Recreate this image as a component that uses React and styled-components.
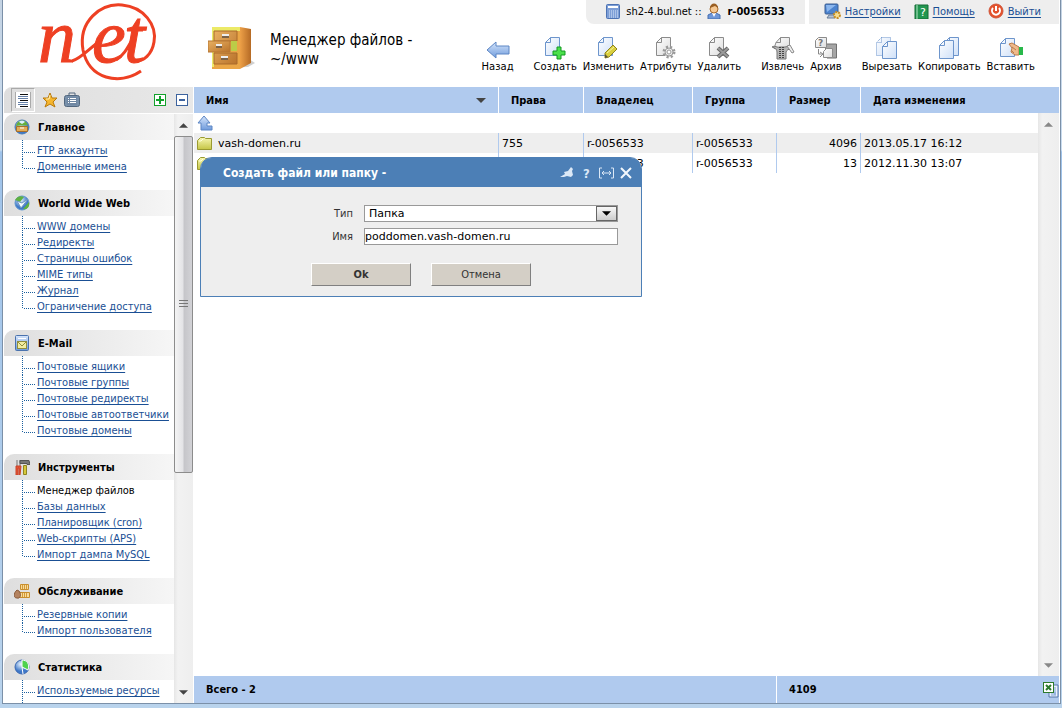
import React from 'react'
import styled, { createGlobalStyle, css } from 'styled-components'

const GlobalStyle = createGlobalStyle`
  * {
    box-sizing: border-box;
  }
  body {
    margin: 0;
    background: #b7d1eb;
    color: #000;
    font-family: 'DejaVu Sans Condensed', Tahoma, sans-serif;
    font-size: 11px;
  }
  svg {
    display: block;
    flex: none;
  }
  button {
    padding: 0;
    border: 0;
    background: none;
    color: inherit;
    font: inherit;
    cursor: pointer;
  }
  a {
    color: #1a4f94;
    text-underline-offset: 2px;
  }
`

const wide = css`
  font-family: 'DejaVu Sans', Verdana, sans-serif;
`

const Desktop = styled.div`
  height: 100vh;
  padding: 0 1px 4px 2px;
  background: linear-gradient(#c4d3e3 0, #c9dcef 150px, #9fc3ea 152px, #b9d3ec 100%);
`

const Frame = styled.div`
  position: relative;
  display: flex;
  flex-direction: column;
  height: 100%;
  padding: 0 1px;
  border: solid #7b90a8;
  border-width: 0 1px 1px;
  background: #fff;
`

const Header = styled.header`
  display: flex;
  flex: none;
  height: 87px;
`

const Logo = styled.div`
  width: 190px;
  flex: none;
`

const PageTitle = styled.div`
  display: flex;
  gap: 14px;
  flex: 1;
  padding: 23px 0 0 14px;
`

const Heading = styled.h1`
  max-width: 180px;
  margin: 8px 0 0;
  font-size: 15px;
  font-weight: normal;
  line-height: 19px;
`

const HeaderRight = styled.div`
  display: flex;
  flex-direction: column;
  align-items: flex-end;
`

const TopBar = styled.div`
  display: flex;
  gap: 4px;
`

const TopBox = styled.div`
  display: flex;
  align-items: center;
  gap: 6px;
  height: 24px;
  padding: ${p => (p.$first ? '0 20px 2px' : '0 18px 2px 15px')};
  background: #eee;
  border-radius: ${p => (p.$first ? '0 0 0 8px' : '0')};
`

const TopLink = styled.a`
  display: flex;
  align-items: center;
  gap: 4px;
  margin-right: ${p => (p.$last ? '0' : '7px')};
`

const Toolbar = styled.nav`
  display: flex;
  gap: 20px;
  padding: 12px 24px 0 0;
`

const ToolGroup = styled.div`
  display: flex;
  gap: 6px;
`

const Tool = styled.button`
  ${wide}
  display: flex;
  flex-direction: column;
  align-items: center;
  font-size: 10px;
  line-height: 14px;
`

const Body = styled.div`
  display: flex;
  flex: 1;
  min-height: 0;
`

const Sidebar = styled.aside`
  display: flex;
  flex-direction: column;
  width: 190px;
  flex: none;
  border-right: 1px solid #fff;
`

const SideTools = styled.div`
  display: flex;
  align-items: center;
  gap: 6px;
  height: 26px;
  flex: none;
  margin-bottom: 1px;
  padding: 0 5px 0 7px;
  border-radius: 8px 0 0 0;
  background: linear-gradient(to right, #dedede, #e8e8e8);
`

const ViewButton = styled.button`
  padding: 3px;
  border: ${p => (p.$pressed ? '1px solid #a9a9a9' : '0')};
  border-right-color: #fff;
  border-bottom-color: #fff;
  margin-right: ${p => (p.$pressed ? '-2px' : '-6px')};
`

const SquareButton = styled.button`
  width: 12px;
  height: 12px;
  border: 1px solid ${p => p.$color};
  background: #fff;
  margin-left: ${p => (p.$push ? 'auto' : '4px')};
  color: ${p => p.$color};
`

const SideScroll = styled.div`
  display: flex;
  flex: 1;
  min-height: 0;
`

const Sections = styled.div`
  flex: 1;
  overflow: hidden;
`

const Section = styled.section`
  padding-bottom: ${p => (p.$clipped ? '0' : '15px')};
`

const SectionTitle = styled.h2`
  display: flex;
  align-items: center;
  gap: 8px;
  height: 26px;
  margin: 0;
  padding-left: 10px;
  border-radius: 10px 0 0 0;
  background: linear-gradient(to right, #dedede, #f6f6f6);
  font-size: 11px;
`

const Tree = styled.ul`
  margin: 0;
  padding: 0 0 0 18px;
  list-style: none;
`

const TreeItem = styled.li`
  padding-left: 15px;
  line-height: 16px;
  white-space: nowrap;
  background:
    repeating-linear-gradient(#1a5f9e 0 1px, transparent 1px 2px) 0 0 / 1px 100% no-repeat,
    repeating-linear-gradient(to right, #1a5f9e 0 1px, transparent 1px 2px) 2px calc(100% - 6px) / 11px 1px no-repeat;
  &:first-child {
    padding-top: 3px;
  }
  &:last-child {
    background-size: ${p => (p.$clipped ? '1px 100%' : '1px calc(100% - 6px)')}, 11px 1px;
    padding-bottom: ${p => (p.$clipped ? '6px' : '0')};
    background-position: 0 0, 2px ${p => (p.$clipped ? '12px' : 'calc(100% - 6px)')};
  }
`

const ScrollBar = styled.div`
  display: flex;
  flex-direction: column;
  flex: 1;
  background: linear-gradient(to right, #e6e6e6, #f2f2f2 20%, #eee);
`

const ScrollArrow = styled.button`
  display: flex;
  align-items: center;
  justify-content: center;
  height: 22px;
  flex: none;
`

const ScrollThumb = styled.div`
  display: flex;
  align-items: center;
  justify-content: center;
  flex: 336;
  border: 1px solid #8c8c8c;
  border-radius: 2px;
  background: linear-gradient(to right, #f4f4f4, #e4e4e7 45%, #c6c6ca 55%, #d2d2d6);
`

const ScrollRest = styled.div`
  flex: 209;
`

const Main = styled.main`
  display: flex;
  flex-direction: column;
  flex: 1;
  min-width: 0;
`

const ListArea = styled.div`
  display: flex;
  flex: 1;
  min-height: 0;
`

const ListTable = styled.div`
  flex: 1;
`

const ScrollColumn = styled.div`
  display: flex;
  flex-direction: column;
  flex: none;
  width: ${p => (p.$narrow ? '19px' : '21px')};
`

const HeaderCap = styled.div`
  height: 26px;
  background: #b0caee;
`

const Table = styled.table`
  width: 100%;
  table-layout: fixed;
  border-collapse: separate;
  border-spacing: 0;
`

const Th = styled.th`
  height: 26px;
  padding: 0 12px;
  border-left: ${p => (p.$first ? '0' : '1px solid #fff')};
  background: #b0caee;
  text-align: left;
`

const SortLabel = styled.span`
  display: flex;
  align-items: center;
  justify-content: space-between;
`

const Row = styled.tr`
  background: ${p => (p.$striped ? '#eee' : '#fff')};
`

const Td = styled.td`
  ${wide}
  height: 20px;
  padding: 0 3px;
  border-left: ${p => (p.$first ? '0' : '1px solid #b0caee')};
  text-align: ${p => (p.$right ? 'right' : 'left')};
  white-space: nowrap;
`

const FileName = styled.span`
  display: flex;
  align-items: center;
  gap: 6px;
`

const Footer = styled.footer`
  display: flex;
  height: 27px;
  flex: none;
  background: #b0caee;
  font-weight: bold;
`

const FooterCell = styled.div`
  display: flex;
  align-items: center;
  justify-content: space-between;
  padding-left: 12px;
  ${p => (p.$total ? 'width: 283px; border-left: 1px solid #fff;' : 'flex: 1;')}
`

const Dialog = styled.form`
  position: absolute;
  left: 197px;
  top: 157px;
  width: 442px;
  border: 1px solid #4c7fb6;
  border-radius: 12px 12px 0 0;
  background: #eee;
`

const DialogBar = styled.div`
  display: flex;
  align-items: center;
  gap: 5px;
  height: 29px;
  padding: 0 8px 0 22px;
  border-radius: 10px 10px 0 0;
  background: #4c7fb6;
  color: #fff;
`

const DialogTitle = styled.h2`
  flex: 1;
  margin: 0;
  font-size: 12px;
`

const Fields = styled.div`
  display: grid;
  grid-template-columns: 152px 254px;
  gap: 6px 11px;
  align-items: center;
  padding-top: 18px;
`

const Label = styled.label`
  color: #333;
  text-align: right;
`

const control = css`
  ${wide}
  display: block;
  width: 100%;
  height: 17px;
  margin: 0;
  border: 1px solid #999;
  border-radius: 0;
  background: #fff;
  color: #000;
  font-size: 11px;
`

const Input = styled.input`
  ${control}
  padding: 0;
`

const SelectBox = styled.div`
  position: relative;
`

const Select = styled.select`
  ${control}
  appearance: none;
  padding: 0 24px 0 4px;
`

const SelectArrow = styled.span`
  position: absolute;
  top: 1px;
  right: 1px;
  display: flex;
  align-items: center;
  justify-content: center;
  width: 21px;
  height: 15px;
  border: 1px solid #666;
  background: linear-gradient(#f8f8f8, #ccc);
  pointer-events: none;
`

const Buttons = styled.div`
  display: flex;
  gap: 20px;
  padding: 18px 0 10px 110px;
`

const DialogButton = styled.button`
  width: 100px;
  height: 23px;
  border: 1px solid;
  border-color: #fff #808080 #808080 #fff;
  background: #d4cfc6;
  color: #333;
  font-weight: ${p => (p.$primary ? 'bold' : 'normal')};
`

const Arrow = ({ up, w = 9, color = '#444' }) => (
  <svg width={w} height="5" viewBox="0 0 10 5">
    <path d={up ? 'M0 5L5 0l5 5z' : 'M0 0h10L5 5z'} fill={color} />
  </svg>
)

const Icon = ({ w = 16, h = w, box, children }) => (
  <svg width={w} height={h} viewBox={box || `0 0 ${w} ${h}`}>{children}</svg>
)

const Sheet = ({ x = 5, y = 1, h = 18, gray, dashed }) => (
  <path
    d={`M${x + 5}.5 ${y}.5h9v${h}h-14v-${h - 5}z M${x + 5}.5 ${y}.5v5h-5`}
    fill={gray ? 'url(#paperGray)' : 'url(#paper)'}
    stroke={gray ? '#8b8b8b' : '#6d95cc'}
    strokeDasharray={dashed ? '1 1' : 'none'}
  />
)

const DefsSvg = styled.svg`
  position: absolute;
`

const Defs = () => (
  <DefsSvg width="0" height="0">
    <defs>
      <linearGradient id="paper" x2="1" y2="1">
        <stop offset="0" stopColor="#fff" />
        <stop offset="1" stopColor="#cfe0f8" />
      </linearGradient>
      <linearGradient id="paperGray" x2="1" y2="1">
        <stop offset="0" stopColor="#fff" />
        <stop offset="1" stopColor="#ddd" />
      </linearGradient>
      <linearGradient id="blue" x2="0" y2="1">
        <stop offset="0" stopColor="#d5e5fb" />
        <stop offset="1" stopColor="#6f9bdc" />
      </linearGradient>
      <linearGradient id="folder" x2="0" y2="1">
        <stop offset="0" stopColor="#f6f6b0" />
        <stop offset="1" stopColor="#c5c545" />
      </linearGradient>
      <linearGradient id="wood" x2="1" y2="1">
        <stop offset="0" stopColor="#e9b163" />
        <stop offset="1" stopColor="#b9732b" />
      </linearGradient>
      <linearGradient id="side" x2="1" y2="0">
        <stop offset="0" stopColor="#eda047" />
        <stop offset="1" stopColor="#b56a25" />
      </linearGradient>
      <radialGradient id="globe" cx="0.4" cy="0.3">
        <stop offset="0" stopColor="#e8f4ff" />
        <stop offset="1" stopColor="#3f78c8" />
      </radialGradient>
    </defs>
  </DefsSvg>
)

const icons = {
  back: (
    <path d="M1 14l9-8v4h13v8H10v4z" fill="url(#blue)" stroke="#5d86c4" strokeLinejoin="round" />
  ),
  create: (
    <>
      <Sheet x={2} />
      <path d="M14 11h4v4h4v4h-4v4h-4v-4h-4v-4h4z" fill="#4be04b" stroke="#129a22" />
    </>
  ),
  edit: (
    <>
      <Sheet x={2} />
      <path d="M9 22v-5l8-8 4 4-8 8z" fill="#d9cf3e" stroke="#8e8420" />
      <path d="M9 22v-4l3 3z" fill="#5b5538" />
      <path d="M11 17l7-6" stroke="#fbf6a5" />
    </>
  ),
  attrs: (
    <>
      <Sheet x={2} gray />
      <circle cx="15" cy="16" r="5" fill="#eee" stroke="#999" strokeWidth="3" strokeDasharray="2 2" />
      <circle cx="15" cy="16" r="4" fill="#eee" stroke="#999" />
      <circle cx="15" cy="16" r="2" fill="#fff" stroke="#999" />
    </>
  ),
  remove: (
    <>
      <Sheet x={2} gray />
      <path d="M11 12l10 9M21 12l-10 9" stroke="#666" strokeWidth="4" />
      <path d="M11 12l10 9M21 12l-10 9" stroke="#999" strokeWidth="2" />
    </>
  ),
  extract: (
    <>
      <path d="M9.500 1.500h9v11H3l2-6z M9.500 1.500v5H5" fill="url(#paperGray)" stroke="#8b8b8b" />
      <path d="M1 11c3-2 5 1 8 0h5c3-1 5 0 6 2-3 0-4 1-5 3v7H6v-7c0-3-2-4-5-5z" fill="#b5b5b5" stroke="#777" />
      <path d="M9 11v12M12 11v12" stroke="#444" strokeWidth="2" strokeDasharray="1 1" />
      <path d="M16 10l5 7 2-1-4-7z" fill="#eee" stroke="#888" />
    </>
  ),
  archive: (
    <>
      <path d="M11 8h11.500v14H13z" fill="#a5a5a5" stroke="#707070" />
      <path d="M4.500 1.500h8v10h-11v-7z" fill="url(#paperGray)" stroke="#8b8b8b" />
      <text x="4" y="10" fontSize="9" fontFamily="DejaVu Sans" fontWeight="bold" fill="#777">?</text>
      <path d="M12.500 12.500h6v9h-9v-6z" fill="url(#paperGray)" stroke="#8b8b8b" />
      <path d="M4.500 13v5H8M6 16l3 2-3 3" fill="none" stroke="#888" />
    </>
  ),
  cut: (
    <>
      <Sheet x={1} dashed />
      <Sheet x={7} y={5} h={17} />
    </>
  ),
  copy: (
    <>
      <Sheet x={7} />
      <Sheet x={2} y={4} />
    </>
  ),
  paste: (
    <>
      <Sheet x={1} y={2} />
      <path d="M10 8l3-1 7 4v8h-4l-4-3 1-4z" fill="#eeb98b" stroke="#b97b4c" />
      <path d="M13 11l4 3M12 14l3 3" stroke="#b97b4c" />
      <path d="M20 11h4v8h-4z" fill="#28b84a" />
    </>
  ),
}

const sectionIcons = {
  main: (
    <>
      <circle cx="8" cy="8" r="7" fill="url(#globe)" stroke="#4a7cb5" />
      <path d="M2 7c1-6 9-8 12-1-4 1-8 0-12 1z" fill="#65b03c" />
      <path d="M5 3c2-2 5-1 6 0L8 5z" fill="#dcefff" />
      <path d="M2.500 7.500h11v5h-11z" fill="#e3ae5b" stroke="#a8702a" />
      <path d="M6 9h4" stroke="#fff" />
    </>
  ),
  web: (
    <>
      <circle cx="8" cy="8" r="7" fill="url(#globe)" stroke="#5e96cf" />
      <path d="M1 5c3-5 7-4 9-3L6 7zM9 14l6-7c1 5-2 8-6 7z" fill="#5fb141" />
      <path d="M3 6l4 7 7-9-6 4z" fill="#f5fbff" stroke="#6b96c0" />
    </>
  ),
  mail: (
    <>
      <rect x="1.500" y="0.500" width="13" height="15" rx="1" fill="url(#blue)" stroke="#4a72ad" />
      <path d="M4 3.500h8" stroke="#fff" />
      <rect x="3.500" y="6.500" width="9" height="7" fill="#f2eda0" stroke="#918e3c" />
      <path d="M4 7l4 4 4-4" fill="none" stroke="#918e3c" />
    </>
  ),
  tools: (
    <>
      <path d="M3 1v6M6 1v6" stroke="#aaa" strokeWidth="2" />
      <path d="M2 7h5l-1 9H5V9H4v7H2z" fill="#e65332" stroke="#c8452a" />
      <path d="M6 1.500h9l1 4h-3v-1H6z" fill="#777" stroke="#555" />
      <path d="M9.500 6.500h3v9h-3z" fill="#d6c83a" stroke="#8f8520" />
    </>
  ),
  service: (
    <>
      <path d="M6.500 1.500h8v5h-8zM5.500 9.500h10v5h-10z" fill="#f9dc9a" stroke="#c98e2c" />
      <path d="M8.500 2v4M10.500 2v4M12.500 2v4M8.500 10v4M10.500 10v4M12.500 10v4" stroke="#d39a3a" />
      <path d="M3 7l2 1c3 4 1 8-2 7-4 0-3-5-1-7z" fill="#b48360" stroke="#8b5c3b" />
    </>
  ),
  stats: (
    <>
      <circle cx="8" cy="8" r="7" fill="url(#globe)" stroke="#3c69b1" />
      <path d="M8 8V1c5 0 8 4 6 10z" fill="#4ed24e" stroke="#fff" />
      <path d="M8 8l1 7" stroke="#fff" />
    </>
  ),
}

const sections = [
  { title: 'Главное', icon: 'main', items: ['FTP аккаунты', 'Доменные имена'] },
  {
    title: 'World Wide Web',
    icon: 'web',
    items: ['WWW домены', 'Редиректы', 'Страницы ошибок', 'MIME типы', 'Журнал', 'Ограничение доступа'],
  },
  {
    title: 'E-Mail',
    icon: 'mail',
    items: ['Почтовые ящики', 'Почтовые группы', 'Почтовые редиректы', 'Почтовые автоответчики', 'Почтовые домены'],
  },
  {
    title: 'Инструменты',
    icon: 'tools',
    items: ['Менеджер файлов', 'Базы данных', 'Планировщик (cron)', 'Web-скрипты (APS)', 'Импорт дампа MySQL'],
  },
  { title: 'Обслуживание', icon: 'service', items: ['Резервные копии', 'Импорт пользователя'] },
  { title: 'Статистика', icon: 'stats', items: ['Используемые ресурсы'], clipped: true },
]

const toolGroups = [
  [['back', 'Назад']],
  [['create', 'Создать'], ['edit', 'Изменить'], ['attrs', 'Атрибуты'], ['remove', 'Удалить']],
  [['extract', 'Извлечь'], ['archive', 'Архив']],
  [['cut', 'Вырезать'], ['copy', 'Копировать'], ['paste', 'Вставить']],
]

const files = [
  { id: 1, name: 'vash-domen.ru', rights: '755', owner: 'r-0056533', group: 'r-0056533', size: 4096, date: '2013.05.17 16:12' },
  { id: 2, name: '', rights: '', owner: 'r-0056533', group: 'r-0056533', size: 13, date: '2012.11.30 13:07' },
]

function NetLogo() {
  return (
    <svg width="160" height="86" viewBox="0 0 160 86" role="img" aria-label="net">
      <g
        fill="#ee4023"
        stroke="#ee4023"
        strokeWidth="1"
        fontFamily="Liberation Serif"
        fontStyle="italic"
        fontSize="76"
      >
        <text x="34" y="62">n</text>
        <text x="88" y="62">e</text>
        <text x="120" y="62">t</text>
      </g>
      <path
        d="M68 61C76 59 84 50 92 44M112 60C119 56 123 49 128 40M137 71C115 86 85 79 79 50C74 21 97 3 118 5C140 7 153 25 150 42C148 54 140 62 130 61M123 30h16"
        fill="none"
        stroke="#ee4023"
        strokeWidth="3"
      />
    </svg>
  )
}

function Cabinet() {
  return (
    <Icon w={48} h={48}>
      <path d="M6 45l34-1 7-4-6-4z" fill="#bbb" opacity="0.7" />
      <path d="M32 4l11 2v34l-11 6z" fill="url(#side)" />
      <path d="M4 4h28v42H4z" fill="#eaa646" />
      <path d="M4 4h28v4H4zM4 8h2v36H4z" fill="#ecea67" />
      <path d="M6 8h23v10H6zM6 30h23v11H6z" fill="url(#wood)" stroke="#a96a2a" />
      <path d="M23 18h6v10h-6z" fill="#bccc47" />
      <path d="M0 18h22v11H0z" fill="url(#wood)" stroke="#b67734" />
      <path d="M14 14h7M8 24h6M13 36h7" stroke="#7a6248" strokeWidth="2" />
      <path d="M14 12h7M8 22h6M13 34h7" stroke="#eee" strokeWidth="2" />
    </Icon>
  )
}

function FolderIcon() {
  return (
    <Icon w={15} h={15}>
      <path d="M0.5 4.5l3-3h4l1 1h6v11h-14z" fill="url(#folder)" stroke="#9a9a30" />
      <path d="M2 5h2l2-2" fill="none" stroke="#fffee0" />
    </Icon>
  )
}

function SideMenu() {
  return (
    <Sidebar>
      <SideTools>
        <ViewButton $pressed aria-label="Список">
          <Icon>
            <path d="M0 0h16v16H0z" fill="#fff" />
            <path d="M0.500 0v16M15.500 0v16" stroke="#aaa" />
            <path d="M5 2.5h8M5 8.5h8M5 14.5h8" stroke="#111" />
            <path d="M3 4.5h10M3 6.5h10M3 10.5h10M3 12.5h10" stroke="#6681a8" />
          </Icon>
        </ViewButton>
        <ViewButton aria-label="Избранное">
          <Icon>
            <path d="M8 1l2 5h5l-4 4 2 5-5-3-5 3 2-5-4-4h5z" fill="#f6b62e" stroke="#b97a0c" />
            <path d="M8 3l-1 4H4" fill="none" stroke="#fff2b5" />
          </Icon>
        </ViewButton>
        <ViewButton aria-label="Задачи">
          <Icon>
            <path d="M5 3V1h6v2" fill="none" stroke="#52677f" />
            <rect x="0.500" y="3.500" width="15" height="11" rx="2" fill="#7890aa" stroke="#52677f" />
            <path d="M3 5h10v8H3z" fill="#6f87a3" />
            <path d="M4 6.500h1M4 8.500h1M4 10.500h1M6 6.500h6M6 8.500h6M6 10.500h6" stroke="#fff" />
          </Icon>
        </ViewButton>
        <SquareButton $color="#12a12b" $push aria-label="Развернуть">
          <Icon w={10}><path d="M5 1v8M1 5h8" stroke="currentColor" strokeWidth="2" /></Icon>
        </SquareButton>
        <SquareButton $color="#3d639e" aria-label="Свернуть">
          <Icon w={10}><path d="M2 5h6" stroke="currentColor" strokeWidth="2" /></Icon>
        </SquareButton>
      </SideTools>
      <SideScroll>
        <Sections>
          {sections.map(section => (
            <Section key={section.title} $clipped={section.clipped}>
              <SectionTitle>
                <Icon>{sectionIcons[section.icon]}</Icon>
                {section.title}
              </SectionTitle>
              <Tree>
                {section.items.map(item => (
                  <TreeItem key={item} $clipped={section.clipped}>
                    {item === 'Менеджер файлов' ? item : <a href="#">{item}</a>}
                  </TreeItem>
                ))}
              </Tree>
            </Section>
          ))}
        </Sections>
        <ScrollColumn $narrow>
          <ScrollBar>
            <ScrollArrow aria-label="Вверх"><Arrow up /></ScrollArrow>
            <ScrollThumb>
              <Icon w={9} h={8}><path d="M0 .5h9M0 3.5h9M0 6.5h9" stroke="#777" /></Icon>
            </ScrollThumb>
            <ScrollRest />
            <ScrollArrow aria-label="Вниз"><Arrow /></ScrollArrow>
          </ScrollBar>
        </ScrollColumn>
      </SideScroll>
    </Sidebar>
  )
}

function FileList() {
  return (
    <Main>
      <ListArea>
        <ListTable>
          <Table>
            <colgroup>
              <col />
              <col width="85" />
              <col width="109" />
              <col width="84" />
              <col width="84" />
              <col width="178" />
            </colgroup>
            <thead>
              <tr>
                <Th $first>
                  <SortLabel>Имя <Arrow w={10} /></SortLabel>
                </Th>
                <Th>Права</Th>
                <Th>Владелец</Th>
                <Th>Группа</Th>
                <Th>Размер</Th>
                <Th>Дата изменения</Th>
              </tr>
            </thead>
            <tbody>
              <Row>
                <Td $first colSpan={6}>
                  <Icon>
                    <path d="M7 1l6 7h-3v3h5v4H4V8H1z" fill="url(#blue)" stroke="#5d86c4" strokeLinejoin="round" />
                  </Icon>
                </Td>
              </Row>
              {files.map((file, i) => (
                <Row key={file.id} $striped={i % 2 === 0}>
                  <Td $first><FileName><FolderIcon />{file.name}</FileName></Td>
                  <Td>{file.rights}</Td>
                  <Td>{file.owner}</Td>
                  <Td>{file.group}</Td>
                  <Td $right>{file.size}</Td>
                  <Td>{file.date}</Td>
                </Row>
              ))}
            </tbody>
          </Table>
        </ListTable>
        <ScrollColumn>
          <HeaderCap />
          <ScrollBar>
            <ScrollArrow aria-label="Вверх"><Arrow up color="#888" /></ScrollArrow>
            <ScrollRest />
            <ScrollArrow aria-label="Вниз"><Arrow color="#888" /></ScrollArrow>
          </ScrollBar>
        </ScrollColumn>
      </ListArea>
      <Footer>
        <FooterCell>Всего - 2</FooterCell>
        <FooterCell $total>
          4109
          <button aria-label="Excel">
            <Icon>
              <path d="M6 3h9v12H6z" fill="#e8f0fc" stroke="#5577aa" />
              <path d="M8 11h5M8 13h5M12 5v8" stroke="#7da0d5" />
              <rect x="0.5" y="0.5" width="10" height="10" fill="#fff" stroke="#2c7a2c" />
              <path d="M3 3l5 5M8 3L3 8" stroke="#2c7a2c" strokeWidth="2" />
            </Icon>
          </button>
        </FooterCell>
      </Footer>
    </Main>
  )
}

function CreateDialog() {
  return (
    <Dialog onSubmit={e => e.preventDefault()}>
      <DialogBar>
        <DialogTitle>Создать файл или папку -</DialogTitle>
        <button type="button" aria-label="Закрепить">
          <Icon w={15} h={14}>
            <path d="M1 11l5-3-1-2 4-1 3-4 2 2-1 2 1 4-2 2-4-1-3 1z" fill="#dbe8f6" />
          </Icon>
        </button>
        <button type="button" aria-label="Справка">
          <Icon w={15} h={14}>
            <text x="4" y="12" fontSize="13" fontWeight="bold" fontFamily="DejaVu Sans Condensed" fill="#dbe8f6">?</text>
          </Icon>
        </button>
        <button type="button" aria-label="Ширина">
          <Icon w={15} h={14}>
            <path d="M3 2H.5v10H3M12 2h2.500v10H12M3 7h9M5 5L3 7l2 2M10 5l2 2-2 2" fill="none" stroke="#dbe8f6" />
          </Icon>
        </button>
        <button type="button" aria-label="Закрыть">
          <Icon w={14} h={14}>
            <path d="M2 2l10 10M12 2L2 12" stroke="#f2f7fc" strokeWidth="2" />
          </Icon>
        </button>
      </DialogBar>
      <Fields>
        <Label htmlFor="type">Тип</Label>
        <SelectBox>
          <Select id="type" defaultValue="Папка">
            <option>Папка</option>
            <option>Файл</option>
          </Select>
          <SelectArrow><Arrow color="#000" /></SelectArrow>
        </SelectBox>
        <Label htmlFor="name">Имя</Label>
        <Input id="name" defaultValue="poddomen.vash-domen.ru" />
      </Fields>
      <Buttons>
        <DialogButton $primary type="submit">Ok</DialogButton>
        <DialogButton type="button">Отмена</DialogButton>
      </Buttons>
    </Dialog>
  )
}

function PageHeader() {
  return (
    <Header>
      <Logo><NetLogo /></Logo>
      <PageTitle>
        <Cabinet />
        <Heading>Менеджер файлов - ~/www</Heading>
      </PageTitle>
      <HeaderRight>
        <TopBar>
          <TopBox $first>
            <Icon w={14} h={16}>
              <rect x="0.5" y="1.5" width="13" height="14" rx="1" fill="#7d9ed6" stroke="#4d73b3" />
              <path d="M2 4h10" stroke="#fff" strokeWidth="2" />
              <path d="M3 8h9M3 10h9M3 12h9M3 14h9" stroke="#dce8fa" strokeDasharray="1 1" />
            </Icon>
            sh2-4.bul.net ::
            <Icon w={14} h={16}>
              <path d="M1 16v-4l4-2h4l4 2v4z" fill="#6f97d8" stroke="#456eb0" />
              <path d="M5 10l2 4 2-4z" fill="#fff" />
              <circle cx="7" cy="6" r="4" fill="#f5c893" stroke="#a56a2d" />
              <path d="M3 5c0-6 8-6 8 0L8 3z" fill="#9a5f24" />
            </Icon>
            <b>r-0056533</b>
          </TopBox>
          <TopBox>
            <TopLink href="#">
              <Icon w={17}>
                <rect x="1" y="1" width="13" height="10" rx="1" fill="#4b83cf" stroke="#3c5f92" />
                <path d="M2 2h10L3 9z" fill="#8cb7ee" />
                <path d="M5 12h5l1 3H3z" fill="#b5c3d6" stroke="#6b7f99" />
                <circle cx="13" cy="12" r="3" fill="#f5dd91" stroke="#c68d25" strokeWidth="2" strokeDasharray="2 1" />
              </Icon>
              Настройки
            </TopLink>
            <TopLink href="#">
              <Icon w={15}>
                <path d="M1 1h13v14H1z" fill="#229650" stroke="#126c35" />
                <path d="M3 1v14" stroke="#b5e5c5" />
                <text x="6" y="12" fontSize="11" fontFamily="DejaVu Sans" fill="#fff">?</text>
              </Icon>
              Помощь
            </TopLink>
            <TopLink href="#" $last>
              <Icon>
                <circle cx="8" cy="8" r="7" fill="#e4512b" stroke="#d0563a" />
                <path d="M5 5a4 4 0 1 0 6 0M8 3v5" fill="none" stroke="#fff" strokeWidth="2" />
              </Icon>
              Выйти
            </TopLink>
          </TopBox>
        </TopBar>
        <Toolbar>
          {toolGroups.map((group, i) => (
            <ToolGroup key={i}>
              {group.map(([icon, label]) => (
                <Tool key={icon}>
                  <Icon w={24}>{icons[icon]}</Icon>
                  {label}
                </Tool>
              ))}
            </ToolGroup>
          ))}
        </Toolbar>
      </HeaderRight>
    </Header>
  )
}

function App() {
  return (
    <Desktop>
      <GlobalStyle />
      <Defs />
      <Frame>
        <PageHeader />
        <Body>
          <SideMenu />
          <FileList />
        </Body>
        <CreateDialog />
      </Frame>
    </Desktop>
  )
}

export default App
